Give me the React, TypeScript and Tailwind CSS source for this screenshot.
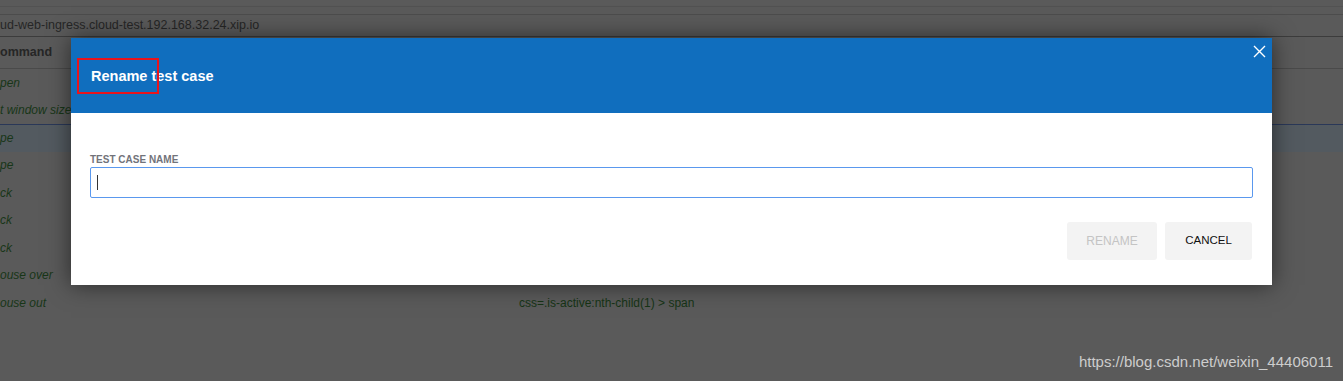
const rows = [
  { cmd: 'pen' },
  { cmd: 't window size' },
  { cmd: 'pe', active: true },
  { cmd: 'pe' },
  { cmd: 'ck' },
  { cmd: 'ck' },
  { cmd: 'ck' },
  { cmd: 'ouse over' },
  { cmd: 'ouse out', target: 'css=.is-active:nth-child(1) > span' },
];

function CloseIcon() {
  return (
    <svg width="13" height="13" viewBox="0 0 13 13" fill="none">
      <path d="M1 1L12 12M12 1L1 12" stroke="#ffffff" strokeWidth="1.4" />
    </svg>
  );
}

export default function App() {
  return (
    <div className="relative h-[381px] w-full overflow-hidden bg-[#5a5a5a] font-['Liberation_Sans',Arial,sans-serif]">
      {/* page behind the overlay */}
      <div className="h-[7px] border-b border-[#525252]" />
      <div className="h-[8px] border-b border-[#4c4c4c]" />
      <div className="flex h-[22px] items-center border-b border-[#3c3c3c] text-[12.5px] text-[#262626]">
        <span className="whitespace-nowrap">ud-web-ingress.cloud-test.192.168.32.24.xip.io</span>
      </div>
      <div className="flex h-[32px] items-center border-b border-[#4a4a4a] text-[12.5px] font-bold text-[#262626]">
        <span>ommand</span>
      </div>
      {rows.map((r, i) => (
        <div
          key={i}
          className={`flex h-[27.5px] items-center text-[12px] italic text-[#183618] ${
            r.active ? 'border-t border-[#2a3858] bg-[#535a60]' : ''
          }`}
        >
          <span className="w-[519px] shrink-0 whitespace-nowrap">{r.cmd}</span>
          {r.target && <span className="not-italic text-[#163416]">{r.target}</span>}
        </div>
      ))}

      <div className="absolute bottom-[8px] right-[10px] text-[15px] text-[#cdcdcd]">
        https://blog.csdn.net/weixin_44406011
      </div>

      {/* dialog */}
      <div className="absolute left-[71px] top-[38px] w-[1201px] bg-white shadow-[0_0_22px_rgba(0,0,0,0.55)]">
        <div className="relative flex h-[75px] items-center bg-[#106ebe] px-[20px] pt-[2px]">
          <h2 className="text-[14.5px] font-bold text-white">Rename test case</h2>
          <div className="absolute left-[6px] top-[20px] h-[36px] w-[82px] border-2 border-[#e8141c]" />
          <button className="absolute right-[6px] top-[7px]">
            <CloseIcon />
          </button>
        </div>
        <div className="px-[19px] pb-[25px] pt-[42px]">
          <label className="mb-[2px] block text-[10px] font-bold leading-[10px] text-[#72737a]">
            TEST CASE NAME
          </label>
          <div className="flex h-[31px] items-center rounded-[2px] border border-[#5a98ee] pl-[6px]">
            <span className="h-[15px] w-px bg-[#333]" />
          </div>
          <div className="mt-[24px] flex justify-end gap-[8px] pr-px">
            <button className="h-[38px] w-[90px] rounded-[3px] bg-[#f3f3f3] text-[12px] text-[#c4c4c4]">
              RENAME
            </button>
            <button className="h-[38px] w-[87px] rounded-[3px] bg-[#f3f3f3] text-[11.5px] text-[#111]">
              CANCEL
            </button>
          </div>
        </div>
      </div>
    </div>
  );
}
